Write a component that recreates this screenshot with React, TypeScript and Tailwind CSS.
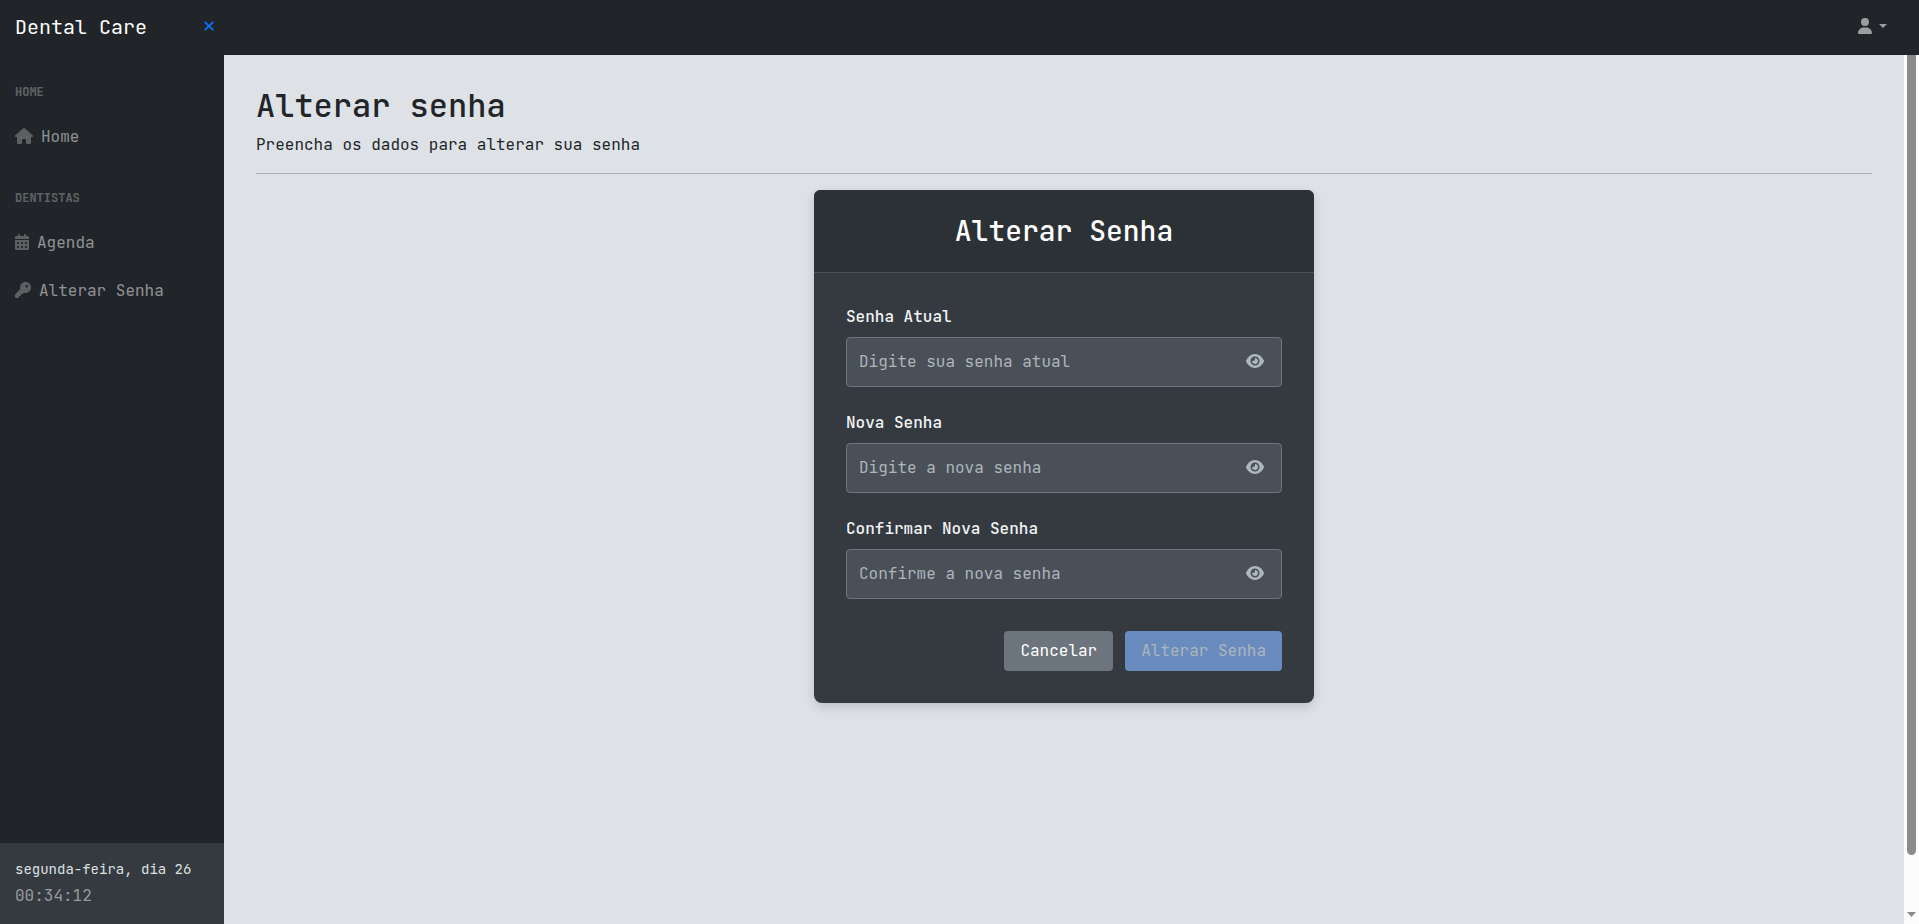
import { FaHouse, FaCalendarDays, FaKey, FaUser, FaEye } from "react-icons/fa6";
import type { ReactNode } from "react";

function NavHeading({ children }: { children: ReactNode }) {
  return <div className="px-[15px] pt-[28px] pb-3 text-xs leading-[18px] font-bold uppercase text-white/30">{children}</div>;
}

function NavLink({ icon, children }: { icon: ReactNode; children: ReactNode }) {
  return (
    <a className="flex h-12 items-center px-[15px] text-white/50">
      <span className="mr-2 pb-0.5 text-white/27">{icon}</span>
      {children}
    </a>
  );
}

function PasswordField({ label, placeholder }: { label: string; placeholder: string }) {
  return (
    <div className="flex flex-col gap-2">
      <label className="font-medium text-[#f1f3f5]">{label}</label>
      <div className="flex h-[50px] items-center rounded border border-[#6c757d] bg-[#495057] pr-[17px] pl-3">
        <input
          type="password"
          placeholder={placeholder}
          className="min-w-0 flex-1 bg-transparent outline-none placeholder:text-[#adb5bd]"
        />
        <FaEye className="mb-0.5 h-4 w-[18px] text-[#adb5bd]" />
      </div>
    </div>
  );
}

export default function App() {
  return (
    <div className="flex h-screen flex-col overflow-hidden bg-[#dee2e6] font-['JetBrains_Mono','DejaVu_Sans_Mono',monospace] text-base leading-6 text-[#212529]">
      <header className="flex h-[55px] shrink-0 items-center bg-[#212529] pr-4 pb-0.5 pl-[15px]">
        <span className="w-[189px] text-xl text-white">Dental Care</span>
        <svg viewBox="0 0 10 10" className="mb-px size-[10px]" fill="none" stroke="#0d6efd" strokeWidth="1.900">
          <path d="M.8 .8 9.2 9.2M9.2 .8.8 9.2" />
        </svg>
        <div className="mr-4 ml-auto flex items-center gap-[7px] pb-0.5 text-[#9b9d9f]">
          <FaUser className="h-4 w-[14px]" />
          <svg viewBox="0 0 8 4" className="h-1 w-2" fill="currentColor">
            <path d="M0 0h8L4 4z" />
          </svg>
        </div>
      </header>
      <div className="flex min-h-0 flex-1">
        <aside className="flex w-56 shrink-0 flex-col bg-[#212529]">
          <nav className="flex-1">
            <NavHeading>Home</NavHeading>
            <NavLink icon={<FaHouse className="h-4 w-[18px]" />}>Home</NavLink>
            <NavHeading>Dentistas</NavHeading>
            <NavLink icon={<FaCalendarDays className="h-4 w-[14px]" />}>Agenda</NavLink>
            <NavLink icon={<FaKey className="size-4" />}>Alterar Senha</NavLink>
          </nav>
          <footer className="h-[81px] bg-[#343a40] px-[15px] pt-[15px]">
            <div className="text-sm leading-[22px] text-[#dee0e1]">segunda-feira, dia 26</div>
            <div className="pt-1 text-[#999c9f]">00:34:12</div>
          </footer>
        </aside>
        <main className="flex min-w-0 flex-1 flex-col px-8 pt-8">
          <h1 className="mb-2 text-[32px] leading-[38.4px] font-medium">Alterar senha</h1>
          <p>Preencha os dados para alterar sua senha</p>
          <hr className="my-4 border-[#adb1b5]" />
          <section className="w-[500px] self-center rounded-lg bg-[#343a40] shadow-[0_4px_12px_rgba(0,0,0,0.15)]">
            <h2 className="rounded-t-md border-b border-[#495057] bg-[#2c3135] py-6 text-center text-[28px] leading-[33.6px] font-medium text-white">
              Alterar Senha
            </h2>
            <form className="flex flex-col gap-6 p-8">
              <PasswordField label="Senha Atual" placeholder="Digite sua senha atual" />
              <PasswordField label="Nova Senha" placeholder="Digite a nova senha" />
              <PasswordField label="Confirmar Nova Senha" placeholder="Confirme a nova senha" />
              <div className="mt-2 flex justify-end gap-3">
                <button type="button" className="h-10 rounded bg-[#6c757d] px-4 text-white">
                  Cancelar
                </button>
                <button type="button" disabled className="h-10 rounded bg-[#698bbd] px-4 text-[#adb5bd]">
                  Alterar Senha
                </button>
              </div>
            </form>
          </section>
        </main>
        <div className="flex w-[15px] shrink-0 flex-col items-center bg-[#fcfcfc]">
          <div className="h-[800px] w-[9px] rounded-b-full bg-[#8b8b8b]" />
          <svg viewBox="0 0 9 5" className="mt-[57px] h-[5px] w-[9px]" fill="#8b8b8b">
            <path d="M0 0h9L4.500 5z" />
          </svg>
        </div>
      </div>
    </div>
  );
}
